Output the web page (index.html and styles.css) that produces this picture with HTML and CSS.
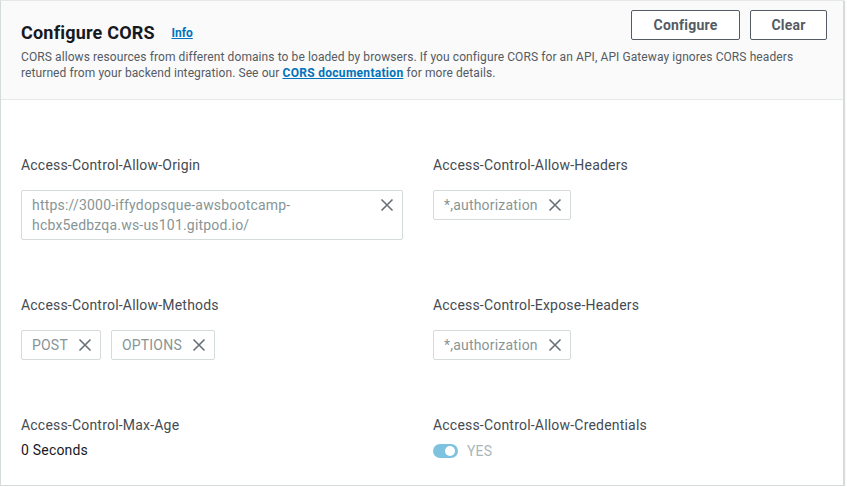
FILE: index.html
```html
<!DOCTYPE html>
<html lang="en">
<head>
<meta charset="utf-8">
<title>Configure CORS</title>
<link rel="stylesheet" href="styles.css">
</head>
<body>
<div class="panel">
  <div class="header">
    <div class="header-top">
      <h2 class="title">Configure CORS <a class="info" href="#">Info</a></h2>
      <div class="actions">
        <button class="btn">Configure</button>
        <button class="btn">Clear</button>
      </div>
    </div>
    <p class="desc">CORS allows resources from different domains to be loaded by browsers. If you configure CORS for an API, API Gateway ignores CORS headers returned from your backend integration. See our <a class="link" href="#">CORS documentation</a> for more details.</p>
  </div>
  <div class="body">
    <div class="field">
      <div class="label">Access-Control-Allow-Origin</div>
      <div class="chips">
        <div class="chip chip-wide"><span class="chip-text">https://3000-iffydopsque-awsbootcamp-hcbx5edbzqa.ws-us101.gitpod.io/</span><svg class="x" viewBox="0 0 14 14"><path d="M1.5 1.5 L12.5 12.5 M12.5 1.5 L1.5 12.5"/></svg></div>
      </div>
    </div>
    <div class="field">
      <div class="label">Access-Control-Allow-Headers</div>
      <div class="chips">
        <div class="chip"><span class="chip-text">*,authorization</span><svg class="x" viewBox="0 0 14 14"><path d="M1.5 1.5 L12.5 12.5 M12.5 1.5 L1.5 12.5"/></svg></div>
      </div>
    </div>
    <div class="field">
      <div class="label">Access-Control-Allow-Methods</div>
      <div class="chips">
        <div class="chip"><span class="chip-text">POST</span><svg class="x" viewBox="0 0 14 14"><path d="M1.5 1.5 L12.5 12.5 M12.5 1.5 L1.5 12.5"/></svg></div>
        <div class="chip"><span class="chip-text">OPTIONS</span><svg class="x" viewBox="0 0 14 14"><path d="M1.5 1.5 L12.5 12.5 M12.5 1.5 L1.5 12.5"/></svg></div>
      </div>
    </div>
    <div class="field">
      <div class="label">Access-Control-Expose-Headers</div>
      <div class="chips">
        <div class="chip"><span class="chip-text">*,authorization</span><svg class="x" viewBox="0 0 14 14"><path d="M1.5 1.5 L12.5 12.5 M12.5 1.5 L1.5 12.5"/></svg></div>
      </div>
    </div>
    <div class="field">
      <div class="label">Access-Control-Max-Age</div>
      <div class="value">0 Seconds</div>
    </div>
    <div class="field">
      <div class="label">Access-Control-Allow-Credentials</div>
      <div class="toggle-row">
        <span class="toggle"><span class="knob"></span></span>
        <span class="toggle-text">YES</span>
      </div>
    </div>
  </div>
</div>
</body>
</html>
```

FILE: styles.css
```css
* { box-sizing: border-box; }
html, body { margin: 0; padding: 0; background: #ffffff; }
body {
  font-family: Roboto, "Liberation Sans", Arial, sans-serif;
  color: #16191f;
}
.panel {
  width: 844px;
  height: 486px;
  border: 1px solid #d5dbdb;
  border-top-color: #e4e8e8;
  box-shadow: 1px 1px 1px rgba(0, 28, 36, 0.15);
  background: #ffffff;
  display: flex;
  flex-direction: column;
}
.header {
  background: #fafafa;
  border-bottom: 1px solid #e4e8e8;
  padding: 9px 16px 17px 20px;
  height: 99px;
}
.header-top {
  display: flex;
  justify-content: space-between;
  align-items: flex-start;
}
.title {
  margin: 0;
  padding-top: 11px;
  font-size: 18px;
  line-height: 24px;
  font-weight: 700;
  letter-spacing: 0.2px;
  color: #16191f;
}
.info {
  font-size: 12px;
  font-weight: 700;
  letter-spacing: 0;
  color: #0073bb;
  margin-left: 12px;
  vertical-align: 2px;
}
.actions { display: flex; gap: 10px; }
.btn {
  font-family: inherit;
  font-size: 14px;
  font-weight: 700;
  letter-spacing: 0.2px;
  color: #545b64;
  background: #ffffff;
  border: 1px solid #545b64;
  border-radius: 2px;
  height: 30px;
  padding: 0;
  cursor: pointer;
}
.btn:first-child { width: 109px; }
.btn:last-child { width: 77px; }
.desc {
  margin: 4px 0 0;
  font-size: 12px;
  line-height: 16px;
  letter-spacing: 0.09px;
  color: #545b64;
}
.link {
  color: #0073bb;
  font-weight: 700;
  letter-spacing: 0.3px;
}
.body {
  flex: 1;
  display: grid;
  grid-template-columns: 392px 392px;
  column-gap: 20px;
  row-gap: 54px;
  align-content: start;
  padding: 54px 20px 0 20px;
}
.label {
  font-size: 14px;
  line-height: 22px;
  letter-spacing: 0.2px;
  color: #444b53;
}
.chips {
  display: flex;
  gap: 10px;
  margin-top: 14px;
}
.chip {
  display: flex;
  align-items: flex-start;
  border: 1px solid #d5dbdb;
  border-radius: 2px;
  padding: 4px 8px 4px 10px;
  font-size: 14px;
  line-height: 20px;
  letter-spacing: 0.2px;
  color: #879596;
  background: #ffffff;
}
.chip-wide {
  width: 382px;
  justify-content: space-between;
}
.chip-wide .chip-text { max-width: 300px; }
.x {
  width: 14px;
  height: 14px;
  margin-top: 3px;
  margin-left: 10px;
  flex: none;
  fill: none;
  stroke: #687078;
  stroke-width: 1.6;
}
.value {
  margin-top: 3px;
  font-size: 14px;
  line-height: 22px;
  letter-spacing: 0.2px;
  color: #16191f;
}
.toggle-row {
  display: flex;
  align-items: center;
  gap: 9px;
  margin-top: 4px;
  height: 22px;
}
.toggle {
  width: 25px;
  height: 14px;
  border-radius: 7px;
  background: #7fc2e0;
  position: relative;
  display: inline-block;
}
.knob {
  position: absolute;
  right: 3px;
  top: 2px;
  width: 10px;
  height: 10px;
  border-radius: 50%;
  background: #ffffff;
}
.toggle-text {
  font-size: 14px;
  letter-spacing: 0.2px;
  color: #aab7b8;
}
```
